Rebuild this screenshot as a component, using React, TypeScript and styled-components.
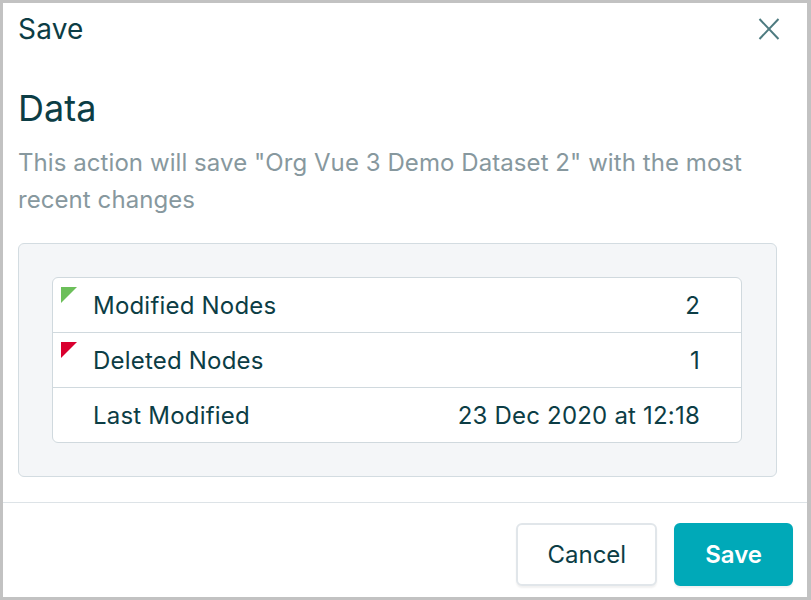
import styled, { createGlobalStyle } from 'styled-components';

const GlobalStyle = createGlobalStyle`
  html, body {
    margin: 0;
    padding: 0;
    background: #c2c2c2;
  }
  body {
    font-family: Inter, "Noto Sans", sans-serif;
  }
`;

type Change = 'modified' | 'deleted';

interface SummaryRow {
  label: string;
  value: string;
  change?: Change;
}

const rows: SummaryRow[] = [
  { label: 'Modified Nodes', value: '2', change: 'modified' },
  { label: 'Deleted Nodes', value: '1', change: 'deleted' },
  { label: 'Last Modified', value: '23 Dec 2020 at 12:18' },
];

const CloseIcon = () => (
  <svg width="22" height="22" viewBox="0 0 22 22" fill="none">
    <path d="M1.5 1 L20.5 21 M20.5 1 L1.5 21" stroke="#4e7b80" strokeWidth="2" />
  </svg>
);

const App = () => {
  return (
    <>
      <GlobalStyle />
      <Frame>
        <Dialog>
          <Header>
            <Title>Save</Title>
            <CloseButton aria-label="Close">
              <CloseIcon />
            </CloseButton>
          </Header>
          <Body>
            <Heading>Data</Heading>
            <Description>
              This action will save "Org Vue 3 Demo Dataset 2" with the most recent changes
            </Description>
            <Panel>
              <Table>
                {rows.map((row) => (
                  <Row key={row.label}>
                    {row.change && <Marker $change={row.change} />}
                    <Label>{row.label}</Label>
                    <Value>{row.value}</Value>
                  </Row>
                ))}
              </Table>
            </Panel>
          </Body>
          <Footer>
            <Button>Cancel</Button>
            <Button $primary>Save</Button>
          </Footer>
        </Dialog>
      </Frame>
    </>
  );
};

const Frame = styled.div`
  box-sizing: border-box;
  height: 600px;
  padding: 3px 4px 3px 3px;
`;

const Dialog = styled.div`
  height: 100%;
  background: #ffffff;
  display: flex;
  flex-direction: column;
  color: #0c3d45;
`;

const Header = styled.div`
  display: flex;
  align-items: center;
  justify-content: space-between;
  padding: 0 27px 0 15px;
  height: 51px;
`;

const Title = styled.h1`
  margin: 0;
  font-size: 28px;
  font-weight: 400;
  line-height: 34px;
  letter-spacing: 0.2px;
`;

const CloseButton = styled.button`
  border: none;
  background: none;
  padding: 0;
  display: flex;
  cursor: pointer;
`;

const Body = styled.div`
  flex: 1;
  padding: 0 30px 0 15px;
`;

const Heading = styled.h2`
  margin: 34px 0 0;
  font-size: 36px;
  font-weight: 400;
  line-height: 40px;
`;

const Description = styled.p`
  margin: 16px 0 0;
  font-size: 24px;
  line-height: 37px;
  letter-spacing: 0.07px;
  color: #87989e;
`;

const Panel = styled.div`
  margin-top: 25px;
  background: #f4f6f8;
  border: 1px solid #d3dce1;
  border-radius: 6px;
  padding: 33px 34px 33px 33px;
`;

const Table = styled.div`
  background: #ffffff;
  border: 1px solid #d0d9de;
  border-radius: 6px;
`;

const Row = styled.div`
  position: relative;
  display: flex;
  align-items: center;
  justify-content: space-between;
  height: 54px;
  padding: 0 41px 0 40px;
  font-size: 24px;
  letter-spacing: 0.2px;
  & + & {
    border-top: 1px solid #d0d9de;
  }
`;

const Marker = styled.span<{ $change: Change }>`
  position: absolute;
  left: 8px;
  top: 9px;
  width: 0;
  height: 0;
  border-top: 16px solid ${({ $change }) => ($change === 'modified' ? '#6cbf5a' : '#d9002f')};
  border-right: 16px solid transparent;
`;

const Label = styled.span``;

const Value = styled.span``;

const Footer = styled.div`
  display: flex;
  justify-content: flex-end;
  gap: 17px;
  border-top: 1px solid #dde3e7;
  padding: 20px 14px 11px 0;
`;

const Button = styled.button<{ $primary?: boolean }>`
  font-family: Inter, "Noto Sans", sans-serif;
  font-size: 24px;
  height: 63px;
  padding: 0 29px;
  border-radius: 6px;
  cursor: pointer;
  box-shadow: 0 2px 2px rgba(0, 0, 0, 0.06);
  border: 2px solid ${({ $primary }) => ($primary ? '#00a9b8' : '#e1e6ea')};
  background: ${({ $primary }) => ($primary ? '#00a9b8' : '#ffffff')};
  color: ${({ $primary }) => ($primary ? '#ffffff' : '#0c3d45')};
  font-weight: ${({ $primary }) => ($primary ? 600 : 400)};
`;

export default App;
